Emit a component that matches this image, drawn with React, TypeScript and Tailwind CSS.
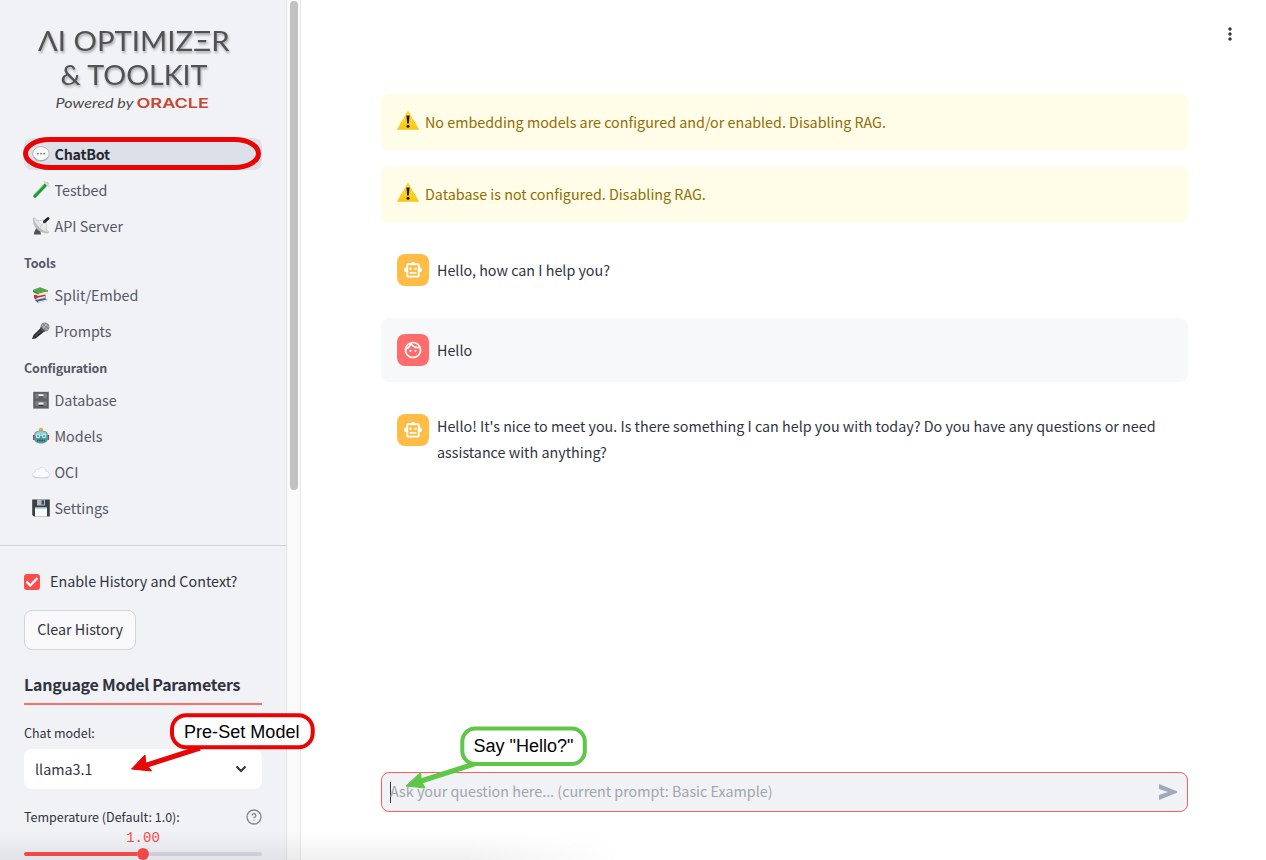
import React from "react";
import { MdOutlineFace, MdMoreVert } from "react-icons/md";

type IconProps = { children: React.ReactNode };
const Glyph = ({ children }: IconProps) => (
  <svg width="18" height="18" viewBox="0 0 18 18" className="shrink-0">{children}</svg>
);

const Chat = () => (
  <Glyph>
    <path d="M4 13.500 3.600 17 8 15z" fill="#b9bcc1" />
    <ellipse cx="9" cy="8.800" rx="8.300" ry="7.200" fill="#fafafa" stroke="#aeb1b5" strokeWidth="0.900" />
    <path d="M2 12c3 4.800 11 4.800 14 0" fill="none" stroke="#a4a7ab" strokeWidth="1.100" />
    <circle cx="5.900" cy="8.700" r="0.900" fill="#777" /><circle cx="9" cy="8.700" r="0.900" fill="#777" /><circle cx="12.100" cy="8.700" r="0.900" fill="#777" />
  </Glyph>
);
const Tube = () => (
  <Glyph>
    <path d="M3 15 14.600 2.800" stroke="#b9c9bd" strokeWidth="4" strokeLinecap="round" />
    <path d="M3 15 13 4.500" stroke="#199a2c" strokeWidth="3.200" strokeLinecap="round" />
    <path d="M2.800 13.500 11.500 4.500" stroke="#6fd07b" strokeWidth="0.800" />
    <path d="m12.500 1 4.200 4" stroke="#d7dadd" strokeWidth="2" strokeLinecap="round" />
  </Glyph>
);
const Dish = () => (
  <Glyph>
    <path d="M5 10 2 15.500v2h7l-1-6z" fill="#4d5359" />
    <path d="M1 1C0 9 6 16 16 16.500c1-.5 1-1.500.5-2.200L3 1C2.300.3 1.300.4 1 1z" fill="#b9bcbd" />
    <path d="M2 1.500c3 1 12 9 14.200 13.500C10 14 3 8 2 1.500z" fill="#e5e6e5" />
    <path d="m8 10 6-6.500M4 4l10-1.200L14.500 14" fill="none" stroke="#b5b9bb" strokeWidth="0.600" />
    <path d="m12.500 4.800 3.500-3.300" stroke="#202326" strokeWidth="2.800" strokeLinecap="round" />
  </Glyph>
);
const Books = () => (
  <Glyph>
    <path d="m3 14 10-2 2.500 2.200L6 17z" fill="#395b9a" /><path d="m6 15.500 9-2v1L6 17z" fill="#eee" />
    <path d="m2 9 11-1.500 1 4L4 13.800 2 12z" fill="#c3332b" /><path d="m4.500 12 9-2v1.500L4.500 13.800z" fill="#f2e9e2" />
    <path d="m1 5 11-1.500 4 2L16 8 6 10 1 7z" fill="#e9e9df" />
    <path d="M1 3.800 8 1.200l8 3L6.500 6.800z" fill="#51a743" /><path d="M1 4v2l5.500 2.500L16 6V4.300L6.500 6.800z" fill="#2e7e2b" />
    <path d="m6.500 7.400 9-2.200v1.600l-9 2z" fill="#f0eee5" />
  </Glyph>
);
const Mic = () => (
  <Glyph>
    <path d="m0 17 1.500-4L9.500 5.200l3.800 3.600L3.500 16.500z" fill="#292a2c" />
    <path d="m3 14.500 6-6" stroke="#74777a" strokeWidth="0.900" />
    <circle cx="13" cy="5" r="4.500" fill="#888b8c" />
    <path d="m10 3 6 5M12 1.200l5 4M10.500 7l5-6" stroke="#c5c7c7" strokeWidth="0.700" />
    <path d="m8.500 5.500 4 4" stroke="#45484a" strokeWidth="1.600" />
  </Glyph>
);
const Cabinet = () => (
  <Glyph>
    <path d="M1.200.800h15.600v16.800H1.200z" fill="#5d6263" />
    <path d="M2.700 2.200h12.600v5.600H2.700zM2.700 9.800h12.600v5.800H2.700z" fill="#797f80" stroke="#535859" strokeWidth="0.600" />
    <path d="M6.500 3.200h5v2h-5zM6.500 11.400h5v2h-5z" fill="#eff0ef" /><path d="M6.500 6h5M6.500 14.500h5" stroke="#303536" />
  </Glyph>
);
const Robot = () => (
  <Glyph>
    <path d="M7.500.800h3l.8 3H6.700z" fill="#f0ad30" />
    <path d="M1 8h3v5H1zM14 8h3v5h-3z" fill="#c63a31" />
    <path d="M2.500 6C4 2.500 14 2.500 15.500 6L16 12c-1 6-13 6-14 0z" fill="#4d9ca6" />
    <path d="M3.500 6C6 3.500 12 3.500 14.500 6v3h-11z" fill="#94ced1" />
    <circle cx="6" cy="9" r="2.200" fill="#c5efed" /><circle cx="12" cy="9" r="2.200" fill="#c5efed" />
    <circle cx="6" cy="9" r="1" fill="#338b9a" /><circle cx="12" cy="9" r="1" fill="#338b9a" />
    <path d="m9 9-1 2.500h2z" fill="#d94e3f" /><path d="M5 13.500h8" stroke="#285f68" strokeWidth="1.800" strokeDasharray="1.500 .7" />
  </Glyph>
);
const Cloud = () => (
  <Glyph>
    <path d="M4 15C-.5 15-.3 9.500 3.200 9.200 3.200 6 6 5.800 7 6.500c1.700-4 7.200-2.200 6.800 1.700 4.700-.3 5 6.500.5 6.800z" fill="#f9fafb" stroke="#cdd2d8" strokeWidth="0.700" />
    <path d="M1.200 12.500c2 2.500 13.500 3 15.800 0-.5 1.500-1.200 2.500-3 2.500H4c-1.500 0-2.500-1-2.800-2.500z" fill="#c9d0d9" />
  </Glyph>
);
const Disk = () => (
  <Glyph>
    <path d="M.2.500h17.600v17H2L.2 16z" fill="#3d4043" />
    <path d="M5 .5h8v6H5z" fill="#b7bbbd" /><path d="M9.500 1.300H12v4.300H9.500z" fill="#494d51" />
    <path d="M3 8h12v9.500H3z" fill="#fafbfb" /><path d="M3 8h12v1.500H3z" fill="#84b4dd" />
  </Glyph>
);

type Item = { label: string; icon: React.ReactNode; active?: boolean };
const main: Item[] = [
  { label: "ChatBot", icon: <Chat />, active: true },
  { label: "Testbed", icon: <Tube /> },
  { label: "API Server", icon: <Dish /> },
];
const tools: Item[] = [
  { label: "Split/Embed", icon: <Books /> },
  { label: "Prompts", icon: <Mic /> },
];
const configuration: Item[] = [
  { label: "Database", icon: <Cabinet /> },
  { label: "Models", icon: <Robot /> },
  { label: "OCI", icon: <Cloud /> },
  { label: "Settings", icon: <Disk /> },
];

const Nav = ({ items }: { items: Item[] }) => (
  <ul className="flex flex-col gap-1">
    {items.map((i) => (
      <li
        key={i.label}
        className={
          i.active
            ? "relative flex h-8 items-center gap-1 rounded-lg bg-[#dce0e9] pl-2 font-bold tracking-[-0.25px] text-[#262730]"
            : "flex h-8 items-center gap-1 rounded-lg pl-2 text-[#555867]"
        }
      >
        {i.icon}
        <span className="pl-[0.5px]">{i.label}</span>
        {i.active && (
          <svg className="absolute -left-px -top-[1px]" width="239" height="33">
            <rect x="2.500" y="2.500" width="233" height="28" rx="24" ry="14" fill="none" stroke="#e90505" strokeWidth="5" />
          </svg>
        )}
      </li>
    ))}
  </ul>
);

const Logo = () => (
  <svg width="238" height="138" viewBox="24 0 238 138" className="block" aria-label="AI Optimizer & Toolkit">
    <g fontFamily="Lato, sans-serif" fill="#525252" className="[filter:drop-shadow(1px_2px_1px_#0000004d)]">
      <text x="38" y="51.200" fontSize="27" textLength="191.500" lengthAdjust="spacingAndGlyphs">ΛI OPTIMIZΞR</text>
      <text x="60.500" y="84.700" fontSize="27" textLength="147" lengthAdjust="spacingAndGlyphs">&amp; TOOLKIT</text>
    </g>
    <text x="55.500" y="108.300" fontFamily="Lato, sans-serif" fontSize="13.500" fontStyle="italic" fill="#4b4b4b" textLength="78" lengthAdjust="spacingAndGlyphs">Powered by</text>
    <text x="136.500" y="108.300" fontFamily="Inter, sans-serif" fontSize="13.500" fontWeight="600" fill="#c74634" textLength="72.500" lengthAdjust="spacingAndGlyphs">ORACLE</text>
  </svg>
);

const Warning = ({ children }: IconProps) => (
  <div className="flex h-14 items-center rounded-lg bg-[#fffce7] pl-4 text-[#926c05]">
    <svg width="22" height="20" viewBox="0 0 22 20" className="-mt-0.5 mr-1.5">
      <defs><linearGradient id="warn" x2="0" y2="1"><stop stopColor="#ffe13c" /><stop offset="1" stopColor="#ffc50d" /></linearGradient></defs>
      <path d="M11 .4 21.500 18.300H.5z" fill="url(#warn)" stroke="#f8c51b" strokeWidth="0.800" strokeLinejoin="round" />
      <path d="M9.400 4.500h3.200l-.8 8h-1.600z" fill="#17191b" /><circle cx="11" cy="15.300" r="1.500" fill="#17191b" />
    </svg>
    <span>{children}</span>
  </div>
);

const Bot = () => (
  <svg width="20" height="20" viewBox="0 0 24 24">
    <path d="M12 2a2.500 2.500 0 0 1 2.400 2H18a2 2 0 0 1 2 2v3a2.800 2.800 0 0 1 0 5.600V19a2 2 0 0 1-2 2H6a2 2 0 0 1-2-2v-4.400A2.800 2.800 0 0 1 4 9V6a2 2 0 0 1 2-2h3.600A2.500 2.500 0 0 1 12 2z" fill="#fff" />
    <path d="M6.200 6.200h11.600v12.600H6.200z" fill="#ffbd45" />
    <circle cx="9" cy="10.500" r="1.500" fill="#fff" /><circle cx="15" cy="10.500" r="1.500" fill="#fff" />
    <path d="M8 14.500h8v2H8z" fill="#fff" />
  </svg>
);

const Avatar = ({ user }: { user?: boolean }) => (
  <div className={user ? "flex size-8 shrink-0 items-center justify-center rounded-lg bg-[#ff6c6c] text-white" : "flex size-8 shrink-0 items-center justify-center rounded-lg bg-[#ffbd45] text-white"}>
    {user ? <MdOutlineFace size={20} /> : <Bot />}
  </div>
);

export default function App() {
  return (
    <div className="relative flex h-[860px] w-[1266px] overflow-hidden bg-white font-['Noto_Sans_CJK_SC',sans-serif] text-[14.320px] leading-[26px] text-[#31333f]">
      <aside className="h-full w-[286px] shrink-0 bg-[#f0f2f6]">
        <div className="px-6">
          <Logo />
          <Nav items={main} />
          <h3 className="mb-1 mt-[9px] h-6 text-[12.500px] font-bold leading-6 tracking-[-0.15px] text-[#555867]">Tools</h3>
          <Nav items={tools} />
          <h3 className="mb-1 mt-[9px] h-6 text-[12.500px] font-bold leading-6 tracking-[-0.15px] text-[#555867]">Configuration</h3>
          <Nav items={configuration} />
        </div>
        <div className="mt-[21px] h-px bg-[#cfd0d4]" />
        <div className="px-6">
          <label className="mt-[23px] flex h-[26px] items-center gap-2.5">
            <span className="flex size-4 items-center justify-center rounded-[3px] bg-[#ff4b4b]">
              <svg width="14" height="12" viewBox="0 0 14 12"><path d="m1.500 5.500 3.700 4L12.500 2" fill="none" stroke="#fff" strokeWidth="2.400" /></svg>
            </span>
            <span className="-mt-0.5">Enable History and Context?</span>
          </label>
          <button className="mt-[15px] flex h-10 w-28 items-center justify-center whitespace-nowrap rounded-lg border border-[#d3d4d9] bg-[#f9f9fb] pb-0.5">Clear History</button>
          <h2 className="mt-[21px] h-8 whitespace-nowrap text-base font-bold leading-[26px] tracking-[-0.260px]">Language Model Parameters</h2>
          <div className="h-0.5 bg-[#ff6c6c]" />
          <div className="mt-4 h-7 text-[12.500px] leading-6">Chat model:</div>
          <div className="flex h-10 items-center justify-between rounded-lg bg-white pl-[11px] pr-[15px]">
            <span>llama3.1</span>
            <svg width="12" height="8" viewBox="0 0 12 8"><path d="m1.500 1.500 4.500 4.500L10.500 1.500" fill="none" stroke="#31333f" strokeWidth="2" /></svg>
          </div>
          <div className="mt-4 flex h-6 items-center justify-between text-[12.500px]">
            <span>Temperature (Default: 1.0):</span>
            <svg width="16" height="16" viewBox="0 0 24 24" fill="none" stroke="#85868e" strokeWidth="2" strokeLinecap="round"><circle cx="12" cy="12" r="10.500" /><path d="M9.100 9a3 3 0 0 1 5.800 1c0 2-3 3-3 3M12 17h.01" /></svg>
          </div>
          <div className="h-[18px] text-center font-['Liberation_Mono',monospace] text-sm leading-[19px] text-[#ff4b4b]">1.00</div>
          <div className="mt-px flex h-3 items-center">
            <span className="h-1 w-[113px] rounded-l bg-[#ff4b4b]" />
            <span className="size-3 rounded-full bg-[#ff4b4b]" />
            <span className="h-1 w-[113px] rounded-r bg-[#d6dae4]" />
          </div>
        </div>
      </aside>

      <div className="flex h-full w-[15px] shrink-0 justify-center border-x border-[#e6e6e6] bg-[#fafafa] pt-px">
        <div className="h-[489px] w-2 rounded-full bg-[#c1c1c1]" />
      </div>

      <main className="flex flex-1 flex-col">
        <header className="flex h-[94px] justify-end pr-[26px] pt-[24px]"><MdMoreVert size={20} /></header>
        <div className="ml-20 flex w-[807px] flex-1 flex-col">
          <Warning>No embedding models are configured and/or enabled. Disabling RAG.</Warning>
          <div className="h-4" />
          <Warning>Database is not configured. Disabling RAG.</Warning>
          <div className="mt-4 flex h-16 items-center gap-2 p-4"><Avatar /><p>Hello, how can I help you?</p></div>
          <div className="mt-4 flex h-16 items-center gap-2 rounded-lg bg-[#f7f8fa] p-4"><Avatar user /><p>Hello</p></div>
          <div className="mt-4 flex gap-2 p-4">
            <Avatar />
            <p className="-mt-px whitespace-nowrap">Hello! It's nice to meet you. Is there something I can help you with today? Do you have any questions or need<br />assistance with anything?</p>
          </div>
          <div className="mb-12 mt-auto flex h-10 items-center rounded-lg border border-[#ff5c5c] bg-[#f0f2f6] pl-2 pr-2.5 text-[#a3a5ad]">
            <span className="h-[21px] w-px bg-[#31333f]" />
            <span className="-ml-px -mt-0.5 flex-1">Ask your question here... (current prompt: Basic Example)</span>
            <svg width="18" height="16" viewBox="0 0 18 16"><path d="M0 0 18 7.300v1.400L0 16v-5l9-3-9-3z" fill="#a3a8b8" /></svg>
          </div>
        </div>
      </main>

      <div className="pointer-events-none absolute bottom-0 left-0 h-7 w-[620px] bg-linear-to-b from-transparent to-black/6 [mask-image:linear-gradient(to_right,black_75%,transparent)]" />

      <svg className="pointer-events-none absolute left-0 top-0" width="1266" height="860" fontFamily="'Liberation Sans', Arial, sans-serif" fontSize="18">
        <path d="m200 748-56 18" stroke="#e90505" strokeWidth="5" />
        <path d="m131.500 769 13.500-14 .8 8.700 5.700 7.300z" fill="#e90505" stroke="#e90505" strokeLinejoin="round" />
        <rect x="172" y="715.300" width="140.700" height="32" rx="14" fill="#fff" stroke="#e90505" strokeWidth="4" />
        <text x="184" y="738" textLength="115.500">Pre-Set Model</text>
        <path d="m474 764-56 18" stroke="#5fc748" strokeWidth="5" />
        <path d="m406 786 14.500-13.500.8 8.300 3.700 7.200z" fill="#5fc748" stroke="#5fc748" strokeLinejoin="round" />
        <rect x="462.300" y="728.500" width="122.500" height="35.500" rx="13" fill="#fff" stroke="#5fc748" strokeWidth="4" />
        <text x="473.500" y="752" textLength="100">Say "Hello?"</text>
      </svg>
    </div>
  );
}
